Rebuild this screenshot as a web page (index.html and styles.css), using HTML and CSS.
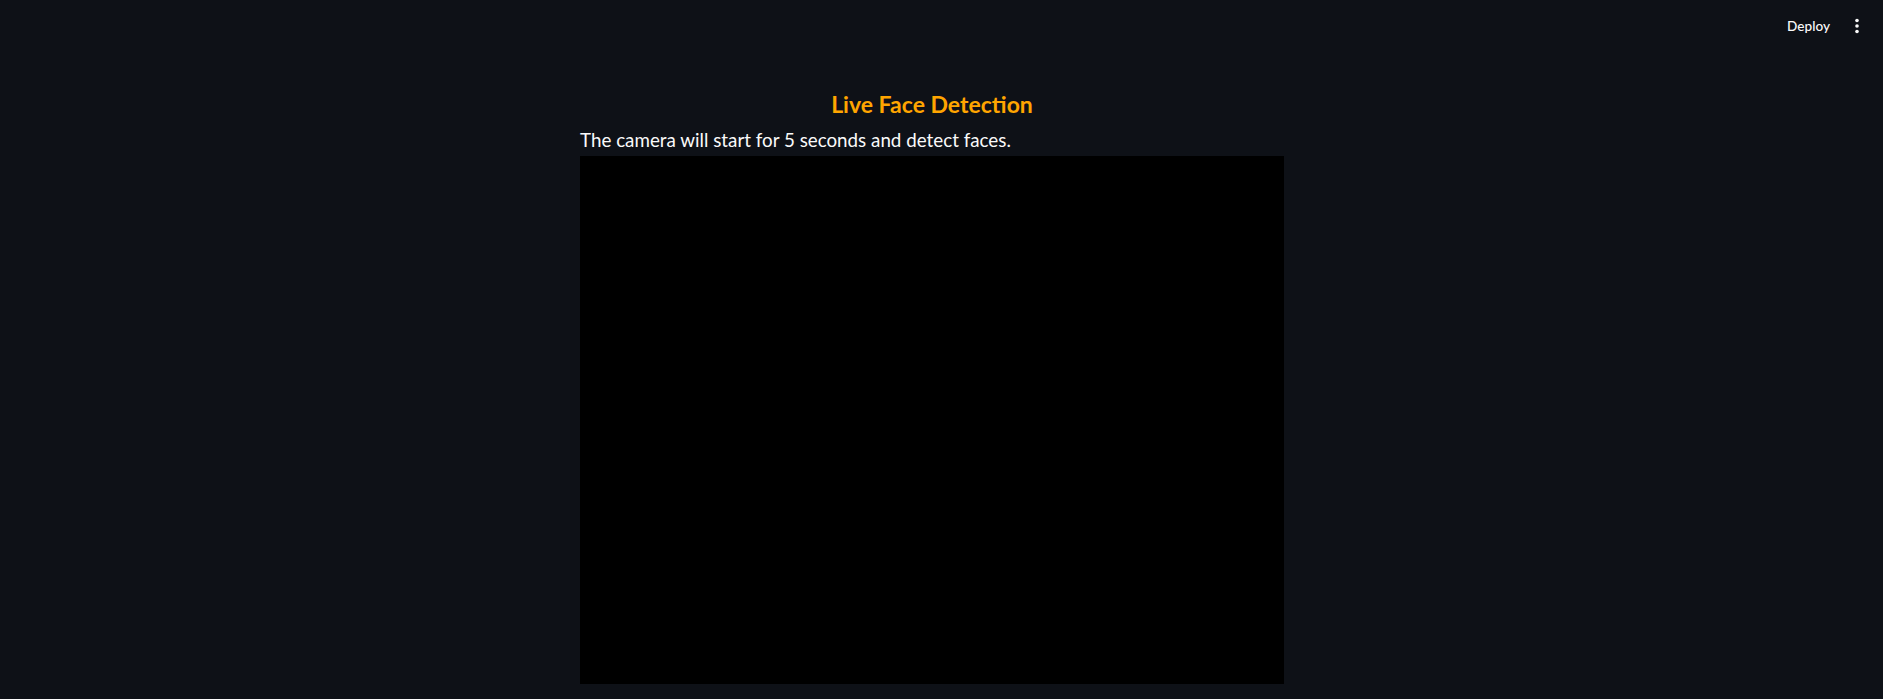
FILE: index.html
```html
<!DOCTYPE html>
<html>
<head>
<meta charset="utf-8">
<link rel="stylesheet" href="styles.css">
</head>
<body>
<header class="topbar">
  <button class="deploy">Deploy</button>
  <button class="menu" aria-label="menu">
    <svg width="6" height="16" viewBox="0 0 6 16"><circle cx="3" cy="2.5" r="1.8" fill="#fafafa"/><circle cx="3" cy="8" r="1.8" fill="#fafafa"/><circle cx="3" cy="13.5" r="1.8" fill="#fafafa"/></svg>
  </button>
</header>
<main class="main">
  <div class="block">
    <h3 class="title">Live Face Detection</h3>
    <p class="desc">The camera will start for 5 seconds and detect faces.</p>
    <div class="frame"></div>
  </div>
</main>
</body>
</html>
```
FILE: styles.css
```css
html, body {
  margin: 0;
  padding: 0;
  background: #0e1117;
  height: 100%;
  overflow: hidden;
}
body {
  font-family: "Lato", "Noto Sans", sans-serif;
  color: #fafafa;
}
.topbar {
  height: 44px;
  display: flex;
  justify-content: flex-end;
  align-items: center;
  padding-right: 19px;
  gap: 8px;
  padding-top: 7px;
  box-sizing: border-box;
}
.deploy {
  background: none;
  border: none;
  color: #fafafa;
  font-family: "Lato", sans-serif;
  font-size: 13.6px;
  font-weight: 500;
  padding: 0 12px;
  height: 30px;
}
.menu {
  background: none;
  border: none;
  padding: 0 4px;
  height: 30px;
  display: flex;
  align-items: center;
}
.main {
  padding-right: 19px;
  display: flex;
  justify-content: center;
}
.block {
  width: 704px;
  display: flex;
  flex-direction: column;
}
.title {
  margin: 45px 0 8px 0;
  text-align: center;
  color: #ffa500;
  font-size: 23px;
  font-weight: 700;
  line-height: 30px;
}
.desc {
  margin: 0 0 3px 0;
  font-size: 18.8px;
  line-height: 26px;
}
.frame {
  height: 528px;
  background: #000;
}
```
